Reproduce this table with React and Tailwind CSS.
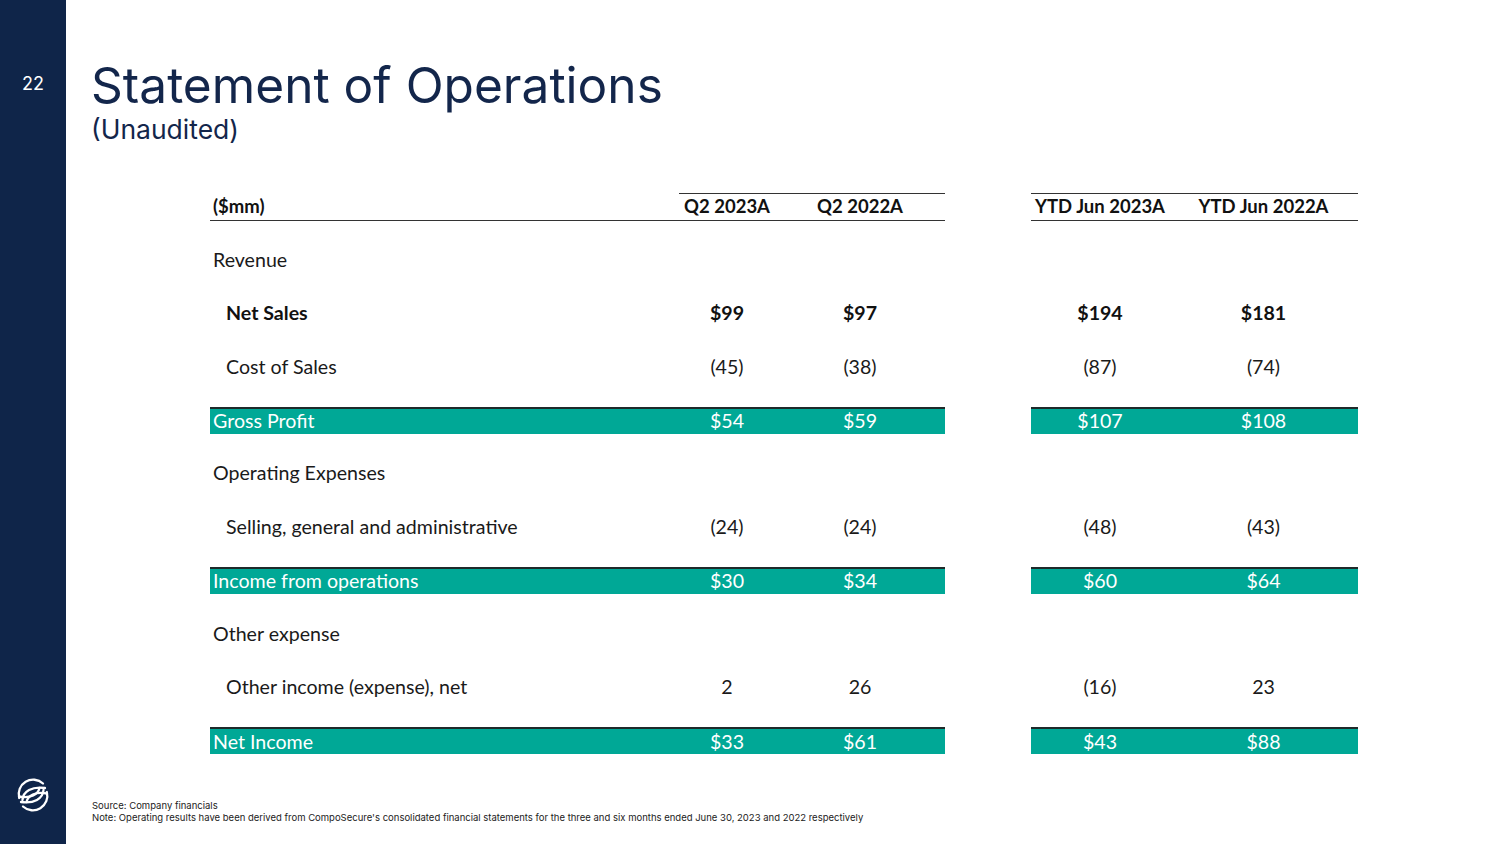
import React from "react";

const rows = [
  { label: "Revenue", h: "h-[54px]" },
  { label: "Net Sales", indent: true, bold: true, vals: ["$99", "$97", "$194", "$181"], h: "h-[53px]" },
  { label: "Cost of Sales", indent: true, vals: ["(45)", "(38)", "(87)", "(74)"], h: "h-[54px]" },
  { label: "Gross Profit", band: true, vals: ["$54", "$59", "$107", "$108"], h: "h-[53px]" },
  { label: "Operating Expenses", h: "h-[53px]" },
  { label: "Selling, general and administrative", indent: true, vals: ["(24)", "(24)", "(48)", "(43)"], h: "h-[54px]" },
  { label: "Income from operations", band: true, vals: ["$30", "$34", "$60", "$64"], h: "h-[53px]" },
  { label: "Other expense", h: "h-[54px]" },
  { label: "Other income (expense), net", indent: true, vals: ["2", "26", "(16)", "23"], h: "h-[53px]" },
  { label: "Net Income", band: true, vals: ["$33", "$61", "$43", "$88"], h: "h-[54px]" },
];

// round swirl mark, drawn as two mirrored stripe groups
const Logo = () => (
  <svg width="36" height="36" viewBox="0 0 36 36" fill="none" stroke="white" strokeLinecap="round" strokeWidth="2.3">
    <path d="M4.2 21 A14.5 14.5 0 0 1 28 6.5" />
    <path d="M7.5 23 C8 14.5 17 9 30 11" />
    <path d="M11.5 25 C13 18.5 20 14.5 32 16.5" />
    <path d="M31.8 15 A14.5 14.5 0 0 1 8 29.5" />
    <path d="M28.5 13 C28 21.5 19 27 6 25" />
    <path d="M24.5 11 C23 17.5 16 21.5 4 19.5" />
  </svg>
);

const Row = ({ r }) => {
  const band = r.band;
  const txt = band ? "text-white" : r.bold ? "text-[#111] font-bold" : "text-[#1a1a1a]";
  const seg = band ? "h-[27px] bg-[#00a896] border-t-2 border-[#1e2a2a]" : "h-[27px]";
  return (
    <div className={`flex items-center ${r.h}`}>
      <div className={`flex items-center w-[735px] ${seg} ${txt}`}>
        <div className={`w-[469px] ${r.indent ? "pl-[16px]" : "pl-[3px]"}`}>{r.label}</div>
        <div className="w-[114px] pr-[18px] text-center">{r.vals?.[0]}</div>
        <div className="w-[134px] text-center">{r.vals?.[1]}</div>
      </div>
      <div className="w-[86px]" />
      <div className={`flex items-center w-[327px] ${seg} ${txt}`}>
        <div className="w-[138px] text-center">{r.vals?.[2]}</div>
        <div className="w-[189px] text-center">{r.vals?.[3]}</div>
      </div>
    </div>
  );
};

export default function App() {
  return (
    <div className="flex w-[1500px] h-[844px] bg-white overflow-hidden">
      <div className="w-[66px] h-full bg-[#0f2549] flex flex-col items-center justify-between pt-[75px] pb-[31px]">
        <div className="text-white text-[18px] leading-none font-['Inter',sans-serif]">22</div>
        <Logo />
      </div>
      <div className="flex-1 flex flex-col">
        <div className="pl-[25px] pt-[56px] text-[#13264b] font-['Inter',sans-serif]">
          <h1 className="text-[49.6px] leading-[58px]">Statement of Operations</h1>
          <div className="text-[26.5px] leading-[30px]">(Unaudited)</div>
        </div>
        <div className="ml-[144px] mt-[49px] text-[19.6px] font-['Lato',sans-serif]">
          <div className="flex font-bold text-[#111] text-[18.5px] whitespace-nowrap">
            <div className="w-[735px] h-[27.5px] border-b-[1.5px] border-[#333] flex items-center">
              <div className="w-[469px] pl-[3px] self-stretch flex items-center pt-[2px]">($mm)</div>
              <div className="w-[266px] self-stretch flex items-center pt-[1px] border-t-[1.5px] border-[#333]">
                <div className="w-[114px] pr-[18px] text-center">Q2 2023A</div>
                <div className="w-[134px] text-center">Q2 2022A</div>
              </div>
            </div>
            <div className="w-[86px]" />
            <div className="w-[327px] h-[27.5px] pt-[1px] border-y-[1.5px] border-[#333] flex items-center">
              <div className="w-[138px] text-center">YTD Jun 2023A</div>
              <div className="w-[189px] text-center">YTD Jun 2022A</div>
            </div>
          </div>
          <div className="h-[12px]" />
          {rows.map((r) => (
            <Row key={r.label} r={r} />
          ))}
        </div>
        <div className="mt-auto mb-[20px] pl-[26px] text-[9.5px] leading-[12px] text-[#222] font-['Inter',sans-serif]">
          <div>Source: Company financials</div>
          <div>Note: Operating results have been derived from CompoSecure's consolidated financial statements for the three and six months ended June 30, 2023 and 2022 respectively</div>
        </div>
      </div>
    </div>
  );
}
